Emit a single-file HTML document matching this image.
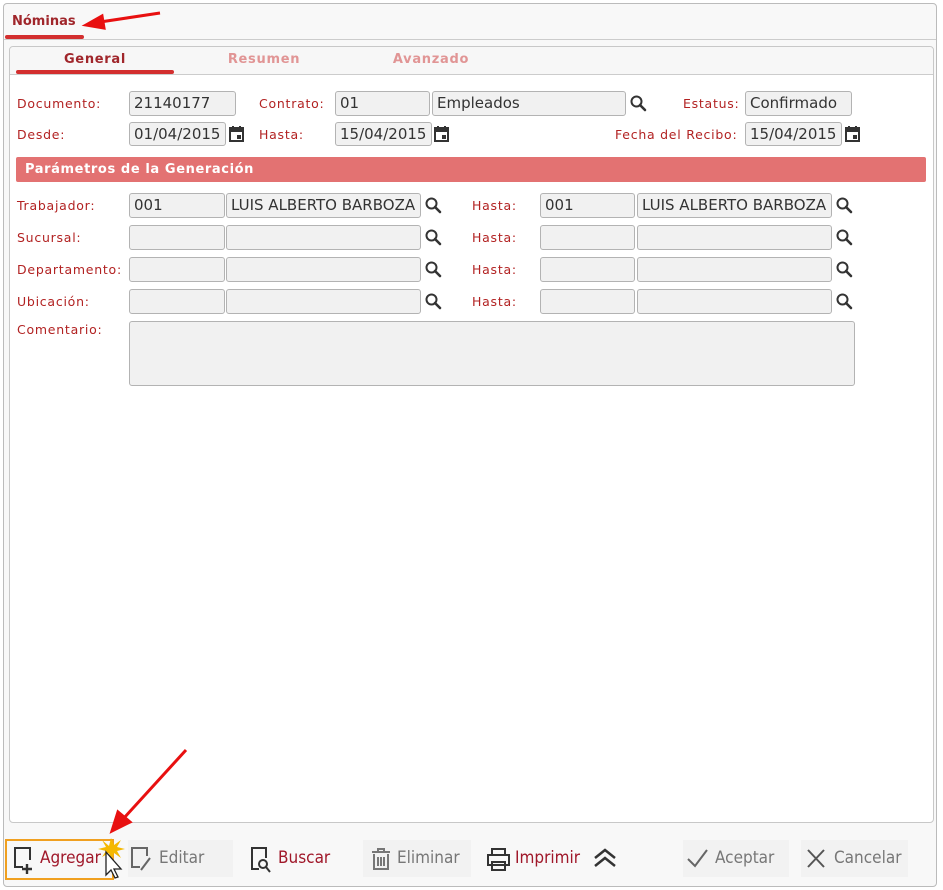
<!DOCTYPE html>
<html><head><meta charset="utf-8"><style>
body{margin:0;width:943px;height:890px;background:#fff;position:relative;overflow:hidden;font-family:"DejaVu Sans","Liberation Sans",sans-serif}
.a{position:absolute}
.lbl{position:absolute;font-size:12.5px;color:#b22222;letter-spacing:.75px;line-height:16px}
.in{position:absolute;box-sizing:border-box;background:#f1f1f1;border:1px solid #b3b3b3;border-radius:3px;font-family:"DejaVu Sans",sans-serif;font-size:15px;color:#333;padding-left:4px;line-height:23px;white-space:nowrap;overflow:hidden}
.btn{position:absolute;height:37px;top:840px;font-size:17px;line-height:37px;color:#777;font-family:"DejaVu Sans Condensed","DejaVu Sans",sans-serif}
.g{background:#f2f2f2}
.r{color:#a0182a}
</style></head><body>
<div class="a" style="left:3px;top:3px;width:932px;height:882px;border:1px solid #bbb;border-radius:4px;background:#f8f8f8"></div>
<div class="a" style="left:4px;top:39px;width:932px;height:1px;background:#ccc"></div>
<div class="a" style="left:12px;top:14px;font-size:13px;font-weight:bold;color:#a0262b">Nóminas</div>
<div class="a" style="left:5px;top:35px;width:79px;height:4px;background:#d32f2f;border-radius:2px"></div>

<div class="a" style="left:9px;top:46px;width:923px;height:775px;border:1px solid #c8c8c8;border-radius:4px;background:#fff"></div>
<div class="a" style="left:10px;top:47px;width:923px;height:27px;background:#f7f7f7;border-bottom:1px solid #ccc;border-radius:4px 4px 0 0"></div>
<div class="a" style="left:16px;top:52px;width:158px;text-align:center;font-size:13px;font-weight:bold;color:#a0262b;letter-spacing:.7px">General</div>
<div class="a" style="left:16px;top:70px;width:158px;height:4px;background:#d32f2f;border-radius:2px"></div>
<div class="a" style="left:185px;top:52px;width:158px;text-align:center;font-size:13px;font-weight:bold;color:#e19595;letter-spacing:.7px">Resumen</div>
<div class="a" style="left:352px;top:52px;width:158px;text-align:center;font-size:13px;font-weight:bold;color:#e19595;letter-spacing:.7px">Avanzado</div>

<div class="lbl" style="left:17px;top:96px">Documento:</div>
<div class="in" style="left:129px;top:91px;width:107px;height:25px">21140177</div>
<div class="lbl" style="left:259px;top:96px">Contrato:</div>
<div class="in" style="left:335px;top:91px;width:95px;height:25px">01</div>
<div class="in" style="left:432px;top:91px;width:194px;height:25px">Empleados</div>
<div class="lbl" style="left:683px;top:96px">Estatus:</div>
<div class="in" style="left:745px;top:91px;width:107px;height:25px">Confirmado</div>

<div class="lbl" style="left:17px;top:127px">Desde:</div>
<div class="in" style="left:129px;top:122px;width:97px;height:24px">01/04/2015</div>
<div class="lbl" style="left:259px;top:127px">Hasta:</div>
<div class="in" style="left:335px;top:122px;width:97px;height:24px">15/04/2015</div>
<div class="lbl" style="left:615px;top:127px">Fecha del Recibo:</div>
<div class="in" style="left:745px;top:122px;width:97px;height:24px">15/04/2015</div>

<svg class="a" style="left:0;top:0" width="943" height="890">
<defs>
<g id="cal"><rect x="1" y="2" width="13" height="13" fill="none" stroke="#333" stroke-width="2"/><rect x="1" y="2" width="13" height="4" fill="#333"/><rect x="3" y="0" width="2" height="3" fill="#333"/><rect x="10" y="0" width="2" height="3" fill="#333"/><rect x="8" y="9" width="4" height="4" fill="#333"/></g>
<g id="srch"><circle cx="6.5" cy="6.5" r="5" fill="none" stroke="#333" stroke-width="2"/><line x1="10" y1="10" x2="15" y2="15" stroke="#333" stroke-width="2.6" stroke-linecap="round"/></g>
</defs>
<use href="#cal" x="229" y="126"/><use href="#cal" x="434" y="126"/><use href="#cal" x="845" y="126"/>
<use href="#srch" x="630" y="95"/>
<use href="#srch" x="425" y="197"/><use href="#srch" x="425" y="229"/><use href="#srch" x="425" y="261"/><use href="#srch" x="425" y="293"/>
<use href="#srch" x="836" y="197"/><use href="#srch" x="836" y="229"/><use href="#srch" x="836" y="261"/><use href="#srch" x="836" y="293"/>
</svg>

<div class="a" style="left:16px;top:157px;width:910px;height:25px;background:#e37272;border-radius:2px"></div>
<div class="a" style="left:25px;top:162px;font-size:13px;font-weight:bold;color:#fff;letter-spacing:.6px">Parámetros de la Generación</div>

<div class="lbl" style="left:17px;top:198px">Trabajador:</div>
<div class="in" style="left:129px;top:193px;width:96px;height:25px">001</div>
<div class="in" style="left:226px;top:193px;width:195px;height:25px">LUIS ALBERTO BARBOZA</div>
<div class="lbl" style="left:472px;top:198px">Hasta:</div>
<div class="in" style="left:540px;top:193px;width:95px;height:25px">001</div>
<div class="in" style="left:637px;top:193px;width:195px;height:25px">LUIS ALBERTO BARBOZA</div>

<div class="lbl" style="left:17px;top:230px">Sucursal:</div>
<div class="in" style="left:129px;top:225px;width:96px;height:25px"></div>
<div class="in" style="left:226px;top:225px;width:195px;height:25px"></div>
<div class="lbl" style="left:472px;top:230px">Hasta:</div>
<div class="in" style="left:540px;top:225px;width:95px;height:25px"></div>
<div class="in" style="left:637px;top:225px;width:195px;height:25px"></div>

<div class="lbl" style="left:17px;top:262px">Departamento:</div>
<div class="in" style="left:129px;top:257px;width:96px;height:25px"></div>
<div class="in" style="left:226px;top:257px;width:195px;height:25px"></div>
<div class="lbl" style="left:472px;top:262px">Hasta:</div>
<div class="in" style="left:540px;top:257px;width:95px;height:25px"></div>
<div class="in" style="left:637px;top:257px;width:195px;height:25px"></div>

<div class="lbl" style="left:17px;top:294px">Ubicación:</div>
<div class="in" style="left:129px;top:289px;width:96px;height:25px"></div>
<div class="in" style="left:226px;top:289px;width:195px;height:25px"></div>
<div class="lbl" style="left:472px;top:294px">Hasta:</div>
<div class="in" style="left:540px;top:289px;width:95px;height:25px"></div>
<div class="in" style="left:637px;top:289px;width:195px;height:25px"></div>

<div class="lbl" style="left:17px;top:322px">Comentario:</div>
<div class="in" style="left:129px;top:321px;width:726px;height:65px"></div>

<!-- toolbar -->
<div class="btn g" style="left:128px;width:105px"></div>
<div class="btn g" style="left:363px;width:108px"></div>
<div class="btn g" style="left:683px;width:106px"></div>
<div class="btn g" style="left:801px;width:107px"></div>
<div class="a" style="left:5px;top:839px;width:109px;height:41px;border:2px solid #f0a020;box-sizing:border-box"></div>
<div class="btn r" style="left:40px">Agregar</div>
<div class="btn" style="left:159px">Editar</div>
<div class="btn r" style="left:278px">Buscar</div>
<div class="btn" style="left:397px">Eliminar</div>
<div class="btn r" style="left:515px">Imprimir</div>
<div class="btn" style="left:715px">Aceptar</div>
<div class="btn" style="left:834px">Cancelar</div>

<svg class="a" style="left:0;top:0" width="943" height="890">
<g fill="none" stroke="#333" stroke-width="2">
<path d="M23 867H15V848H30V860"/><path d="M27 864V874M22 869H32" stroke-width="2.4"/>
<path d="M140 867H132V848H147V856" stroke="#666"/><path d="M141 870L150 858" stroke="#666"/>
<path d="M259 869H252V848H266V858"/><circle cx="263" cy="864" r="4"/><path d="M266 867L270 872"/>
<path d="M372 852H390M378 852V849H384V852M374 854V869H388V854M378 857V866M381 857V866M384 857V866" stroke="#777"/>
<path d="M492 855V849H505V855M488 855H509V865H488ZM492 862H505V870H492Z"/>
<path d="M595 858L605 850L615 858M595 866L605 858L615 866" stroke-width="2.5"/>
<path d="M688 859L695 866L707 850" stroke="#666"/>
<path d="M808 850L824 867M824 850L808 867" stroke="#555"/>
</g>
<g fill="#f5b800"><path d="M109 846L111 838L114 845L121 840L117 847L125 849L117 851L121 858L114 853L111 860L109 853L102 857L106 851L98 849L106 847L102 840Z"/></g>
<path d="M106 852V875L111 870L115 878L118 877L114 869H121Z" fill="#fff" stroke="#222" stroke-width="1.3"/>
<g stroke="#e81010" stroke-width="3" fill="#e81010">
<line x1="160" y1="13" x2="100" y2="22"/><path d="M86 25L102 16L104 28Z"/>
<line x1="186" y1="750" x2="124" y2="818"/><path d="M112 831L118 812L130 822Z"/>
</g>
</svg>
</body></html>
